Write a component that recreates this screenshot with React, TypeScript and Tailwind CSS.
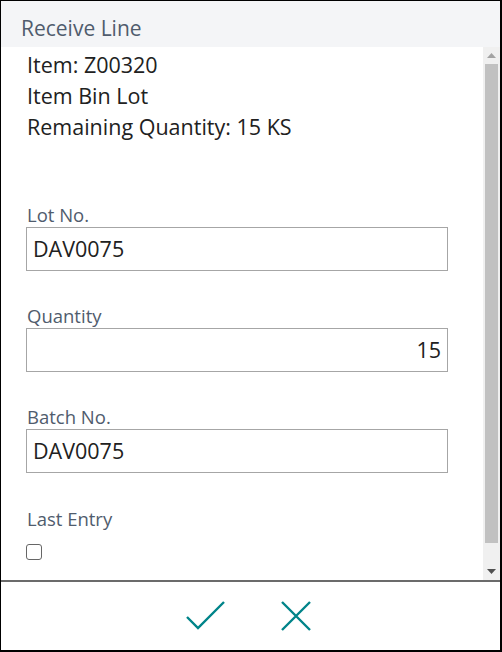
export default function App() {
  const font = { fontFamily: '"Open Sans", "Noto Sans", sans-serif' };

  const fields = [
    { label: "Lot No.", value: "DAV0075", right: false },
    { label: "Quantity", value: "15", right: true },
    { label: "Batch No.", value: "DAV0075", right: false },
  ];

  return (
    <div
      className="w-[502px] h-[652px] bg-white border-l border-t border-r-2 border-b-2 border-black flex flex-col overflow-hidden"
      style={font}
    >
      <div className="h-[46px] shrink-0 bg-[#f4f5f7] pl-[20px] pt-[13px] text-[21px] leading-[28px] text-[#505c6d]">
        Receive Line
      </div>

      <div className="flex flex-1 min-h-0">
        <div className="flex-1 pl-[25px] pr-[35px]">
          <div className="pl-[1px] pt-[2px] text-[21.5px] leading-[31px] text-[#212121]">
            <div>Item: Z00320</div>
            <div>Item Bin Lot</div>
            <div>Remaining Quantity: 15 KS</div>
          </div>

          <div className="mt-[61px] flex flex-col gap-[33px]">
            {fields.map((f, i) => (
              <div key={i}>
                <div className="text-[18.5px] leading-[24px] text-[#505c6d] pl-[1px]">{f.label}</div>
                <div
                  className={`h-[44px] border border-[#a6a6a6] flex items-center px-[6px] text-[21.5px] text-[#212121] ${f.right ? "justify-end" : ""}`}
                >
                  {f.value}
                </div>
              </div>
            ))}
          </div>

          <div className="mt-[34px]">
            <div className="text-[18.5px] leading-[24px] text-[#505c6d] pl-[1px]">Last Entry</div>
            <div className="mt-[13px] w-[16px] h-[16px] border border-[#666] rounded-[3px]" />
          </div>
        </div>

        <div className="w-[17px] shrink-0 bg-[#f0f0f0] flex flex-col items-center">
          <div className="h-[17px] flex items-center justify-center">
            <svg width="9" height="5" viewBox="0 0 9 5">
              <path d="M0 5 L4.5 0 L9 5 Z" fill="#a3a3a3" />
            </svg>
          </div>
          <div className="w-[13px] h-[479px] bg-[#c1c1c1]" />
          <div className="flex-1" />
          <div className="h-[17px] flex items-center justify-center">
            <svg width="9" height="5" viewBox="0 0 9 5">
              <path d="M0 0 L9 0 L4.5 5 Z" fill="#505050" />
            </svg>
          </div>
        </div>
      </div>

      <div className="h-[70px] shrink-0 border-t-2 border-[#6b6b6b] flex items-center justify-center gap-[56px] pr-[6px]">
        <svg width="40" height="30" viewBox="0 0 40 30">
          <path d="M2 16 L13 27 L39 1" fill="none" stroke="#008489" strokeWidth="2.4" />
        </svg>
        <svg width="30" height="30" viewBox="0 0 30 30">
          <path d="M1 1 L29 29 M29 1 L1 29" fill="none" stroke="#008489" strokeWidth="2.4" />
        </svg>
      </div>
    </div>
  );
}
